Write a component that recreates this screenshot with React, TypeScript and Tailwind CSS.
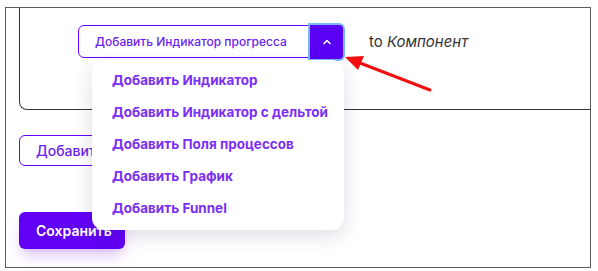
import React from "react";

const items = [
  "Добавить Индикатор",
  "Добавить Индикатор с дельтой",
  "Добавить Поля процессов",
  "Добавить График",
  "Добавить Funnel",
];

export default function App() {
  return (
    <div
      className="relative w-[598px] h-[271px] bg-white overflow-hidden"
      style={{ fontFamily: "Inter, 'Noto Sans', sans-serif" }}
    >
      {/* screenshot frame */}
      <div className="relative ml-[5px] mt-[7px] w-[586px] h-[261px] border border-[#5a5a5a] overflow-hidden">
        <div className="ml-[13px] w-[600px] h-[102px] border-l-[1.5px] border-b-[1.5px] border-[#333] rounded-bl-lg">
          <div className="flex items-center pl-[58px] pt-[17px]">
            <div className="flex items-stretch h-[34px]">
              <button className="flex items-center h-[33px] w-[232px] pl-4 border-[1.5px] border-[#6a00ff] rounded-l-md bg-white text-[12px] font-medium text-[#6b21f2]">
                Добавить Индикатор прогресса
              </button>
              <button className="flex items-center justify-center w-[33px] h-[34px] -mt-[0.5px] bg-[#5a00f5] rounded-r-sm ring-2 ring-[#7ab8ff]">
                <svg width="10" height="10" viewBox="0 0 10 10">
                  <path d="M2 6.5 L5 3.5 L8 6.5" stroke="white" strokeWidth="1.6" fill="none" strokeLinecap="round" strokeLinejoin="round" />
                </svg>
              </button>
            </div>
            <span className="ml-[26px] text-[15px] text-[#333]">
              to <em>Компонент</em>
            </span>
          </div>
        </div>

        <div className="ml-[13px] mt-[25px]">
          <button className="h-[31px] w-[90px] overflow-hidden whitespace-nowrap text-left pl-4 border-[1.5px] border-[#6a00ff] rounded-md text-[14px] font-medium text-[#6b21f2] bg-white">
            Добавит
          </button>
        </div>

        <div className="ml-[13px] mt-[46px]">
          <button className="h-[37px] w-[106px] flex items-center pl-[17px] bg-[#6200f5] rounded-md text-white text-[14px] font-semibold shadow-lg shadow-[#6200f5]/20">
            Сохранить
          </button>
        </div>
      </div>

      {/* dropdown menu */}
      <div className="absolute left-[92px] top-[60px] w-[252px] h-[170px] bg-white rounded-xl shadow-[0_6px_20px_rgba(40,30,90,0.15)] flex flex-col pt-[4px]">
        {items.map((t) => (
          <div key={t} className="h-[32px] flex items-center pl-[20px] text-[13.5px] font-bold text-[#7a2ef5]">
            {t}
          </div>
        ))}
      </div>

      {/* annotation arrow */}
      <svg className="absolute left-0 top-0" width="598" height="271">
        <line x1="430" y1="90" x2="360" y2="63" stroke="#f01010" strokeWidth="3" strokeLinecap="round" />
        <path d="M345 57 L364 56 L358 70 Z" fill="#f01010" />
      </svg>
    </div>
  );
}
